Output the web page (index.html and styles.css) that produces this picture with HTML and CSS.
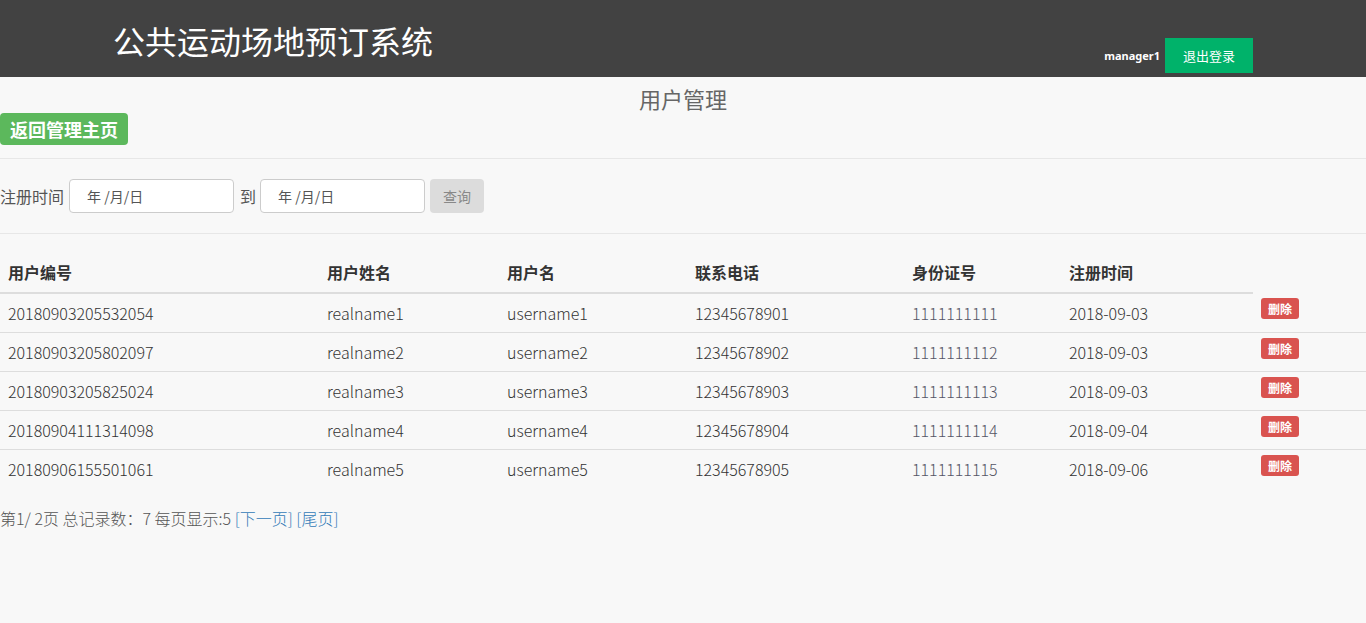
FILE: index.html
```html
<!DOCTYPE html>
<html lang="zh-CN">
<head>
<meta charset="utf-8">
<title>用户管理</title>
<link rel="stylesheet" href="styles.css">
</head>
<body>
<header class="topbar">
  <h1 class="brand">公共运动场地预订系统</h1>
  <div class="user">
    <span class="uname">manager1</span>
    <a class="logout" href="#">退出登录</a>
  </div>
</header>
<main>
  <h2 class="page-title">用户管理</h2>
  <a class="back" href="#">返回管理主页</a>
  <hr class="sep">
  <form class="filter">
    <label>注册时间</label>
    <div class="date"><span>年 /月/日</span></div>
    <span class="to">到</span>
    <div class="date"><span>年 /月/日</span></div>
    <button type="button" class="query">查询</button>
  </form>
  <hr class="sep sep2">
  <table class="users">
    <thead>
      <tr><th class="c1">用户编号</th><th class="c2">用户姓名</th><th class="c3">用户名</th><th class="c4">联系电话</th><th class="c5">身份证号</th><th class="c6">注册时间</th></tr>
    </thead>
    <tbody>
      <tr><td>20180903205532054</td><td>realname1</td><td>username1</td><td>12345678901</td><td class="id">1111111111</td><td>2018-09-03</td><td class="act"><a class="del" href="#">删除</a></td></tr>
      <tr><td>20180903205802097</td><td>realname2</td><td>username2</td><td>12345678902</td><td class="id">1111111112</td><td>2018-09-03</td><td class="act"><a class="del" href="#">删除</a></td></tr>
      <tr><td>20180903205825024</td><td>realname3</td><td>username3</td><td>12345678903</td><td class="id">1111111113</td><td>2018-09-03</td><td class="act"><a class="del" href="#">删除</a></td></tr>
      <tr><td>20180904111314098</td><td>realname4</td><td>username4</td><td>12345678904</td><td class="id">1111111114</td><td>2018-09-04</td><td class="act"><a class="del" href="#">删除</a></td></tr>
      <tr><td>20180906155501061</td><td>realname5</td><td>username5</td><td>12345678905</td><td class="id">1111111115</td><td>2018-09-06</td><td class="act"><a class="del" href="#">删除</a></td></tr>
    </tbody>
  </table>
  <p class="pager">第1/ 2页 总记录数：7 每页显示:5 <a href="#">[下一页]</a> <a href="#">[尾页]</a></p>
</main>
</body>
</html>
```
FILE: styles.css
```css
* { box-sizing: border-box; }
html, body { margin: 0; padding: 0; }
body {
  background: #f8f8f8;
  font-family: "Noto Sans CJK SC", sans-serif;
  color: #333;
  font-size: 16px;
}
a { text-decoration: none; }
.topbar {
  height: 77px;
  background: #424242;
  display: flex;
  justify-content: space-between;
  padding: 0 113px;
}
.brand {
  margin: 0;
  font-weight: 400;
  font-size: 32px;
  line-height: 32px;
  color: #fff;
  padding-top: 24px;
  font-family: "Noto Sans CJK SC", sans-serif;
}
.user {
  display: flex;
  align-items: center;
  align-self: flex-end;
  margin-bottom: 4px;
  gap: 5px;
}
.uname {
  color: #fff;
  font-size: 11px;
  font-weight: 700;
  font-family: "Noto Sans", sans-serif;
}
.logout {
  width: 88px;
  height: 35px;
  background: #00b26a;
  color: #fff;
  font-size: 13px;
  display: flex;
  align-items: center;
  justify-content: center;
}
main { display: flex; flex-direction: column; }
.page-title {
  margin: 6px 0 0;
  text-align: center;
  font-weight: 400;
  font-size: 22px;
  line-height: 30px;
  color: #666;
}
.back {
  align-self: flex-start;
  background: #5cb85c;
  color: #fff;
  font-weight: 700;
  font-size: 18px;
  line-height: 32px;
  height: 32px;
  padding: 0 10px;
  border-radius: 4px;
}
.sep {
  width: 100%;
  border: 0;
  border-top: 1px solid #e7e7e7;
  margin: 13px 0 0;
}
.filter {
  display: flex;
  align-items: center;
  height: 74px;
  color: #555;
}
.filter label { margin-right: 5px; }
.date {
  width: 165px;
  height: 34px;
  border: 1px solid #ccc;
  border-radius: 4px;
  background: #fff;
  display: flex;
  align-items: center;
  padding-left: 17px;
  font-size: 14px;
  color: #555;
}
.to { margin: 0 4px 0 6px; }
.query {
  margin-left: 5px;
  width: 54px;
  height: 34px;
  border: 0;
  border-radius: 4px;
  background: #dcdcdc;
  color: #888;
  font-size: 14px;
  font-family: "Noto Sans CJK SC", sans-serif;
}
.sep2 { margin-top: 0; }
.users {
  margin-top: 20px;
  width: 100%;
  border-collapse: collapse;
}
.users th {
  text-align: left;
  font-weight: 700;
  font-size: 16px;
  padding: 7px 8px 9px;
  line-height: 22px;
  border-bottom: 2px solid #ddd;
  color: #333;
}
.users td {
  padding: 8px;
  line-height: 22px;
  border-top: 1px solid #ddd;
  font-weight: 300;
  color: #333;
  vertical-align: top;
}
.users tbody tr:first-child td { border-top: 0; }
.users td.id { color: #556; }
.users td.act { padding-top: 5px; }
.c1 { width: 319px; }
.c2 { width: 180px; }
.c3 { width: 188px; }
.c4 { width: 217px; }
.c5 { width: 157px; }
.c6 { width: 192px; }
.del {
  display: block;
  width: 38px;
  text-align: center;
  background: #d9534f;
  color: #fff;
  font-size: 12px;
  font-weight: 700;
  line-height: 21px;
  border-radius: 3px;
}
.pager {
  margin: 18px 0 0;
  font-size: 16px;
  color: #555;
  font-weight: 300;
}
.pager a { color: #337ab7; }
```
